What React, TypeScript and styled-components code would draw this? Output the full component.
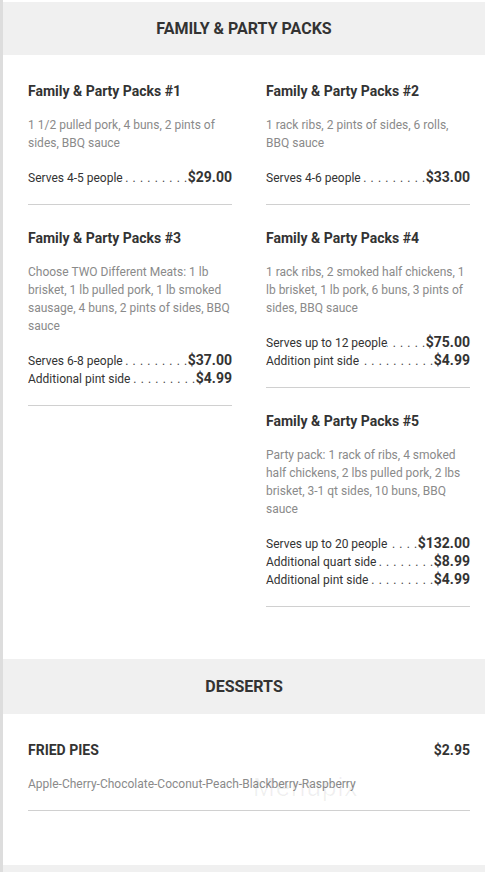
import React from "react";
import styled, { createGlobalStyle } from "styled-components";

const Global = createGlobalStyle`
  html, body { margin: 0; padding: 0; background: #fff; }
  body { font-family: Roboto, "Liberation Sans", Arial, sans-serif; color: #333; }
  * { box-sizing: border-box; }
`;

const Page = styled.div`
  position: relative;
  min-height: 872px;
  border-left: 3px solid #dddddd;
  padding-top: 2px;
  overflow: hidden;
`;

const SectionHeader = styled.h2<{ $h: number }>`
  margin: 0;
  height: ${(p) => p.$h}px;
  background: #f0f0f0;
  display: flex;
  align-items: center;
  justify-content: center;
  font-size: 16px;
  font-weight: 700;
  color: #333;
  text-transform: uppercase;
`;

const SectionBody = styled.div<{ $pb: number }>`
  padding: 26px 15px ${(p) => p.$pb}px 25px;
`;

const Grid = styled.div`
  display: grid;
  grid-template-columns: minmax(0, 1fr) minmax(0, 1fr);
  column-gap: 34px;
  align-items: start;
`;

const Column = styled.div`
  display: flex;
  flex-direction: column;
  gap: 23px;
  min-width: 0;
`;

const Item = styled.div<{ $pb?: number }>`
  border-bottom: 1px solid #d0d0d0;
  padding-bottom: ${(p) => p.$pb ?? 18}px;
`;

const TitleRow = styled.div`
  display: flex;
  justify-content: space-between;
  align-items: center;
  height: 20px;
`;

const Title = styled.h3<{ $upper?: boolean }>`
  margin: 0;
  font-size: 14px;
  line-height: 20px;
  font-weight: 700;
  color: #333;
  text-transform: ${(p) => (p.$upper ? "uppercase" : "none")};
`;

const TitlePrice = styled.span`
  font-size: 14px;
  font-weight: 700;
  color: #333;
`;

const Desc = styled.p`
  margin: 15px 0 0;
  font-size: 12px;
  line-height: 18px;
  color: #8a8a8a;
`;

const Prices = styled.div`
  margin-top: 16px;
  display: flex;
  flex-direction: column;
`;

const PriceLine = styled.div`
  display: flex;
  align-items: baseline;
  height: 18px;
  line-height: 18px;
  white-space: nowrap;
`;

const Label = styled.span`
  flex: none;
  font-size: 12px;
  color: #333;
`;

const Leader = styled.span`
  flex: 1 1 0;
  width: 0;
  min-width: 0;
  overflow: hidden;
  font-size: 12px;
  letter-spacing: 0.6px;
  color: #444;
  direction: rtl;
  padding-left: 2px;
`;

const Amount = styled.span`
  flex: none;
  font-size: 14px;
  font-weight: 700;
  color: #333;
`;

const Footer = styled.div`
  height: 8px;
  background: #f0f0f0;
`;

const Watermark = styled.div`
  position: absolute;
  left: 250px;
  top: 772px;
  font-size: 26px;
  font-family: "Liberation Sans", Arial, sans-serif;
  color: rgba(0, 0, 0, 0.06);
  letter-spacing: 1px;
  pointer-events: none;
`;

type P = { label: string; price: string };
type Pack = { title: string; desc: string; prices: P[] };

const DOTS = " . . . . . . . . . . . . . . . . . . . . . . . . . . . . . . . . . . . .";

const left: Pack[] = [
  {
    title: "Family & Party Packs #1",
    desc: "1 1/2 pulled pork, 4 buns, 2 pints of sides, BBQ sauce",
    prices: [{ label: "Serves 4-5 people", price: "$29.00" }],
  },
  {
    title: "Family & Party Packs #3",
    desc: "Choose TWO Different Meats: 1 lb brisket, 1 lb pulled pork, 1 lb smoked sausage, 4 buns, 2 pints of sides, BBQ sauce",
    prices: [
      { label: "Serves 6-8 people", price: "$37.00" },
      { label: "Additional pint side", price: "$4.99" },
    ],
  },
];

const right: Pack[] = [
  {
    title: "Family & Party Packs #2",
    desc: "1 rack ribs, 2 pints of sides, 6 rolls, BBQ sauce",
    prices: [{ label: "Serves 4-6 people", price: "$33.00" }],
  },
  {
    title: "Family & Party Packs #4",
    desc: "1 rack ribs, 2 smoked half chickens, 1 lb brisket, 1 lb pork, 6 buns, 3 pints of sides, BBQ sauce",
    prices: [
      { label: "Serves up to 12 people", price: "$75.00" },
      { label: "Addition pint side", price: "$4.99" },
    ],
  },
  {
    title: "Family & Party Packs #5",
    desc: "Party pack: 1 rack of ribs, 4 smoked half chickens, 2 lbs pulled pork, 2 lbs brisket, 3-1 qt sides, 10 buns, BBQ sauce",
    prices: [
      { label: "Serves up to 20 people", price: "$132.00" },
      { label: "Additional quart side", price: "$8.99" },
      { label: "Additional pint side", price: "$4.99" },
    ],
  },
];

function PackItem({ p }: { p: Pack }) {
  return (
    <Item>
      <Title>{p.title}</Title>
      <Desc>{p.desc}</Desc>
      <Prices>
        {p.prices.map((l) => (
          <PriceLine key={l.label}>
            <Label>{l.label}</Label>
            <Leader aria-hidden="true">{DOTS}</Leader>
            <Amount>{l.price}</Amount>
          </PriceLine>
        ))}
      </Prices>
    </Item>
  );
}

export default function App() {
  return (
    <>
      <Global />
      <Page>
        <section>
          <SectionHeader $h={53}>Family &amp; Party Packs</SectionHeader>
          <SectionBody $pb={52}>
            <Grid>
              <Column>
                {left.map((p) => (
                  <PackItem key={p.title} p={p} />
                ))}
              </Column>
              <Column>
                {right.map((p) => (
                  <PackItem key={p.title} p={p} />
                ))}
              </Column>
            </Grid>
          </SectionBody>
        </section>
        <section>
          <SectionHeader $h={55}>Desserts</SectionHeader>
          <SectionBody $pb={54}>
            <Item $pb={17}>
              <TitleRow>
                <Title $upper>Fried Pies</Title>
                <TitlePrice>$2.95</TitlePrice>
              </TitleRow>
              <Desc>Apple-Cherry-Chocolate-Coconut-Peach-Blackberry-Raspberry</Desc>
            </Item>
          </SectionBody>
        </section>
        <Footer />
        <Watermark>Menupix</Watermark>
      </Page>
    </>
  );
}
